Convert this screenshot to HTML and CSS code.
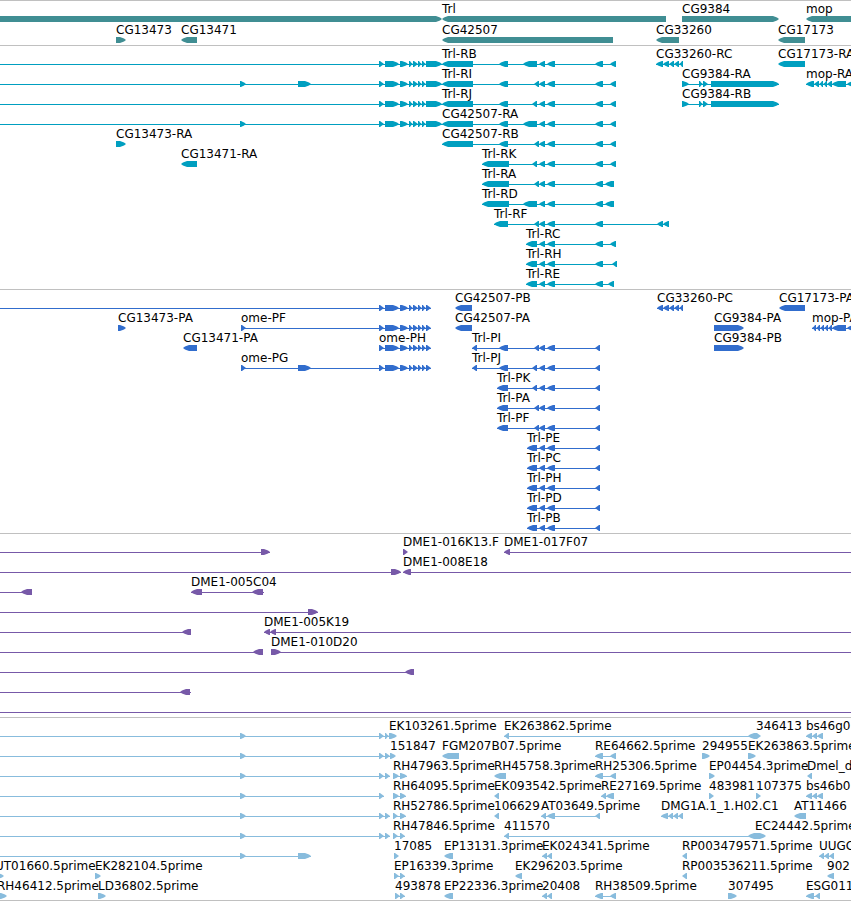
FILE: index.html
```html
<!DOCTYPE html>
<html lang="en">
<head>
  <meta charset="UTF-8" />
  <meta name="viewport" content="width=device-width, initial-scale=1.0" />
  <title>Trl region</title>
  <link rel="stylesheet" href="styles.css">
</head>
<body>
  <main class="browser">
    <section class="track genes" id="genes" aria-label="Genes"></section>
    <section class="track transcripts" id="transcripts" aria-label="Transcripts"></section>
    <section class="track proteins" id="proteins" aria-label="Proteins"></section>
    <section class="track bacs" id="bacs" aria-label="BAC clones"></section>
    <section class="track ests" id="ests" aria-label="ESTs"></section>
  </main>
  <script src="tracks.js"></script>
</body>
</html>
```
FILE: styles.css
```css
body {
  margin: 0;
  background: white;
  font-family: "DejaVu Sans", Verdana, sans-serif;
  font-size: 12px;
}

.browser {
  border-bottom: 1px solid #c0c0c0;
}

.track {
  display: flex;
  flex-direction: column;
  padding: 1px 0 2px;
  border-top: 1px solid #c0c0c0;
}
.track:last-child { padding-bottom: 1px; }

.row {
  display: block;
  width: 100%;
  height: 20px;
  overflow: hidden;
}
.row text { fill: black; }

.genes { gap: 1px; fill: #408e93; }
.transcripts { fill: #009fc0; }
.proteins { fill: #316dcd; }
.bacs { fill: #7759a8; }
.ests { fill: #88bcdd; }
```
FILE: tracks.js
```js
const SVG = "http://www.w3.org/2000/svg";
const FAR = 3000; // feature runs past the right edge

// exon groups shared by several features
const OME = "379-384 385-399 400-408 409-413 413-418 418-422 422-426";
const OME_RNA = OME + " 426-442";
const OME_PEP = OME + " 426-431";
const MID = "539-545 547-555 595-603";
const MID_PEP = "539-545 547-555 595-600";
const MOP = "814-819 819-823 823-827 827-832 832-846 847-860";

// feature: [label, strand, exons, line start, line end]
const tracks = {
  genes: [
    [["", ">", "-20-442"], ["Trl", "<", "442-666"], ["CG9384", ">", "682-779"], ["mop", "<", "806-3000"]],
    [["CG13473", ">", "116-126"], ["CG13471", "<", "181-197"], ["CG42507", "<", "442-613"],
     ["CG33260", "<", "656-679"], ["CG17173", "<", "778-805"]]
  ],
  transcripts: [
    [["", ">", OME_RNA, 0], ["Trl-RB", "<", `442-473 499-508 523-537 ${MID} 610-616`],
     ["CG33260-RC", "<", "656-663 663-669 669-674 674-679 679-683"], ["CG17173-RA", "<", "778-805"]],
    [["", ">", "240-246 298-311 " + OME_RNA, 0], ["Trl-RI", "<", `442-473 499-508 534-539 ${MID} 610-616`],
     ["CG9384-RA", ">", "682-689 699-703 703-708 711-779"], ["mop-RA", "<", "806-814 " + MOP]],
    [["", ">", OME_RNA, 0], ["Trl-RJ", "<", `442-473 499-508 532-537 ${MID} 610-616`],
     ["CG9384-RB", ">", "682-689 699-703 703-708 711-779"]],
    [["", ">", "240-246 " + OME_RNA, 0], ["CG42507-RA", "<", `442-473 499-508 523-537 ${MID} 610-616`]],
    [["CG13473-RA", ">", "116-126"], ["CG42507-RB", "<", `442-473 499-508 534-539 ${MID} 610-616`]],
    [["CG13471-RA", "<", "181-197"], ["Trl-RK", "<", `482-509 532-537 ${MID} 610-616`]],
    [["Trl-RA", "<", `482-509 534-539 ${MID} 605-614`]],
    [["Trl-RD", "<", `482-509 523-537 ${MID} 605-614`]],
    [["Trl-RF", "<", `494-508 534-539 ${MID} 657-663 663-669`]],
    [["Trl-RC", "<", `526-537 ${MID} 610-616`]],
    [["Trl-RH", "<", `526-537 ${MID} 612-617`]],
    [["Trl-RE", "<", `526-537 ${MID} 608-614`]]
  ],
  proteins: [
    [["", ">", OME_PEP, 0], ["CG42507-PB", "<", "455-472"],
     ["CG33260-PC", "<", "657-663 663-669 669-674 674-679 679-683"], ["CG17173-PA", "<", "779-805"]],
    [["CG13473-PA", ">", "118-126"], ["ome-PF", ">", "241-246 " + OME_PEP], ["CG42507-PA", "<", "455-472"],
     ["CG9384-PA", ">", "714-744"], ["mop-PA", "<", "812-816 816-820 820-824 824-828 828-832 832-846 847-860"]],
    [["CG13471-PA", "<", "183-197"], ["ome-PH", ">", OME_PEP],
     ["Trl-PI", "<", `472-477 499-508 534-539 ${MID_PEP}`], ["CG9384-PB", ">", "714-744"]],
    [["ome-PG", ">", "241-246 298-311 " + OME_PEP], ["Trl-PJ", "<", `472-477 499-508 532-537 ${MID_PEP}`]],
    [["Trl-PK", "<", `497-508 532-537 ${MID_PEP}`]],
    [["Trl-PA", "<", `497-508 534-539 ${MID_PEP}`]],
    [["Trl-PF", "<", `497-508 534-539 ${MID_PEP}`]],
    [["Trl-PE", "<", "527-537 " + MID_PEP]],
    [["Trl-PC", "<", "527-537 " + MID_PEP]],
    [["Trl-PH", "<", "527-537 " + MID_PEP]],
    [["Trl-PD", "<", "527-537 " + MID_PEP]],
    [["Trl-PB", "<", "527-537 " + MID_PEP]]
  ],
  bacs: [
    [["", ">", "261-270", 0], ["DME1-016K13.F", ">", "403-408"], ["DME1-017F07", "<", "504-510", 504, FAR]],
    [["", ">", "391-401", 0], ["DME1-008E18", "<", "403-411", 403, FAR]],
    [["", "<", "21-32", 0], ["DME1-005C04", "<", "191-202 252-263", 191, 264]],
    [["", ">", "308-318", 0]],
    [["", "<", "182-191", 0], ["DME1-005K19", "<", "264-270 270-276", 264, FAR]],
    [["", "<", "253-263", 0], ["DME1-010D20", ">", "271-281", 271, FAR]],
    [["", "<", "405-414", 0]],
    [["", "<", "180-190", 0, 191]],
    [["", "<", "", 0, FAR]]
  ],
  ests: [
    [["", ">", "240-246 379-384 385-389", 0], ["EK103261.5prime", ">", "389-397"],
     ["EK263862.5prime", "<", "504-509 748-756"], ["346413", ">", "756-761"], ["bs46g0", "<", "806-812 812-817 817-823"]],
    [["", ">", "240-246 379-384 385-390", 0], ["151847", ">", "390-396"], ["FGM207B07.5prime", "<", "442-459"],
     ["RE64662.5prime", "<", "595-603 610-616"], ["294955", ">", "702-710"], ["EK263863.5prime", ">", "748-756"]],
    [["", ">", "240-246 379-384 385-390", 0], ["RH47963.5prime", ">", "393-399 400-407"], ["RH45758.3prime", "<", "494-506"],
     ["RH25306.5prime", "<", "595-603 610-616"], ["EP04454.3prime", ">", "709-715"], ["Dmel_d", "<", "807-812"]],
    [["", ">", "240-246 379-384", 0], ["RH64095.5prime", ">", "393-399 400-406"], ["EK093542.5prime", "<", "494-499"],
     ["RE27169.5prime", "<", "601-606 606-614"], ["483981", ">", "709-714"], ["107375", ">", "756-761"],
     ["bs46b0", "<", "806-812 812-817 817-823"]],
    [["", ">", "240-246 379-384 385-390", 0], ["RH52786.5prime", ">", "393-398 400-406"], ["106629", "<", "494-499"],
     ["AT03649.5prime", "<", "541-546 547-555 595-600"], ["DMG1A.1_1.H02.C1", "<", "661-668 668-673 673-678 678-683"],
     ["AT11466", "<", "794-806"]],
    [["", ">", "240-246 379-384 385-390", 0], ["RH47846.5prime", ">", "393-398 400-405"],
     ["411570", "<", "504-509 748-757"], ["EC24442.5prime", ">", "755-766"]],
    [["", ">", "240-246 298-311", 0], ["17085", ">", "394-399"], ["EP13131.3prime", "<", "444-453"],
     ["EK024341.5prime", "<", "542-547 547-552"], ["RP003479571.5prime", "<", "682-687"], ["UUGC", "<", "819-824 824-829 829-834"]],
    [["UT01660.5prime", ">", "-5-4"], ["EK282104.5prime", ">", "95-101"], ["EP16339.3prime", ">", "394-399 400-405"],
     ["EK296203.5prime", "<", "515-522"], ["RP003536211.5prime", "<", "682-687"], ["902", "<", "827-834"]],
    [["RH46412.5prime", ">", "-3-7"], ["LD36802.5prime", ">", "98-106"], ["493878", ">", "395-400 400-405"],
     ["EP22336.3prime", "<", "444-453"], ["20408", "<", "542-547 547-552"], ["RH38509.5prime", "<", "595-603 610-616"],
     ["307495", ">", "728-737"], ["ESG011", "<", "806-814 815-820"]]
  ]
};

function add(parent, name, attrs) {
  const el = document.createElementNS(SVG, name);
  for (const key in attrs) el.setAttribute(key, attrs[key]);
  parent.appendChild(el);
  return el;
}

// box from y 14 to 20 with a pointed, slightly bulging tip on the strand's side
function exonPoints(start, end, strand) {
  const dir = strand === ">" ? 1 : -1;
  const from = dir > 0 ? start : end;
  const to = dir > 0 ? end : start;
  const neck = end - start > 7 ? to - dir * 6 : from + dir;
  const bulge = to - dir * 2;
  return `${from},14 ${neck},14 ${bulge},15.5 ${to},17 ${bulge},18.5 ${neck},20 ${from},20`;
}

function drawFeature(svg, [label, strand, exonText, lineStart, lineEnd]) {
  const exons = (exonText.match(/-?\d+-\d+/g) || []).map(part => {
    const [, start, end] = part.match(/^(-?\d+)-(\d+)$/);
    return [Number(start), Number(end)];
  });
  const x1 = lineStart ?? exons[0][0];
  const x2 = lineEnd ?? exons[exons.length - 1][1];

  // introns
  if (exons.length !== 1 || lineStart !== undefined) {
    add(svg, "rect", { x: x1, y: 17, width: x2 - x1, height: 1 });
  }
  exons.forEach(([start, end]) => {
    add(svg, "polygon", { points: exonPoints(start, end, strand) });
  });
  if (label) {
    add(svg, "text", { x: x1, y: 11 }).textContent = label;
  }
}

for (const id in tracks) {
  const track = document.getElementById(id);
  tracks[id].forEach(features => {
    const svg = add(track, "svg", { class: "row" });
    features.forEach(feature => drawFeature(svg, feature));
  });
}
```
